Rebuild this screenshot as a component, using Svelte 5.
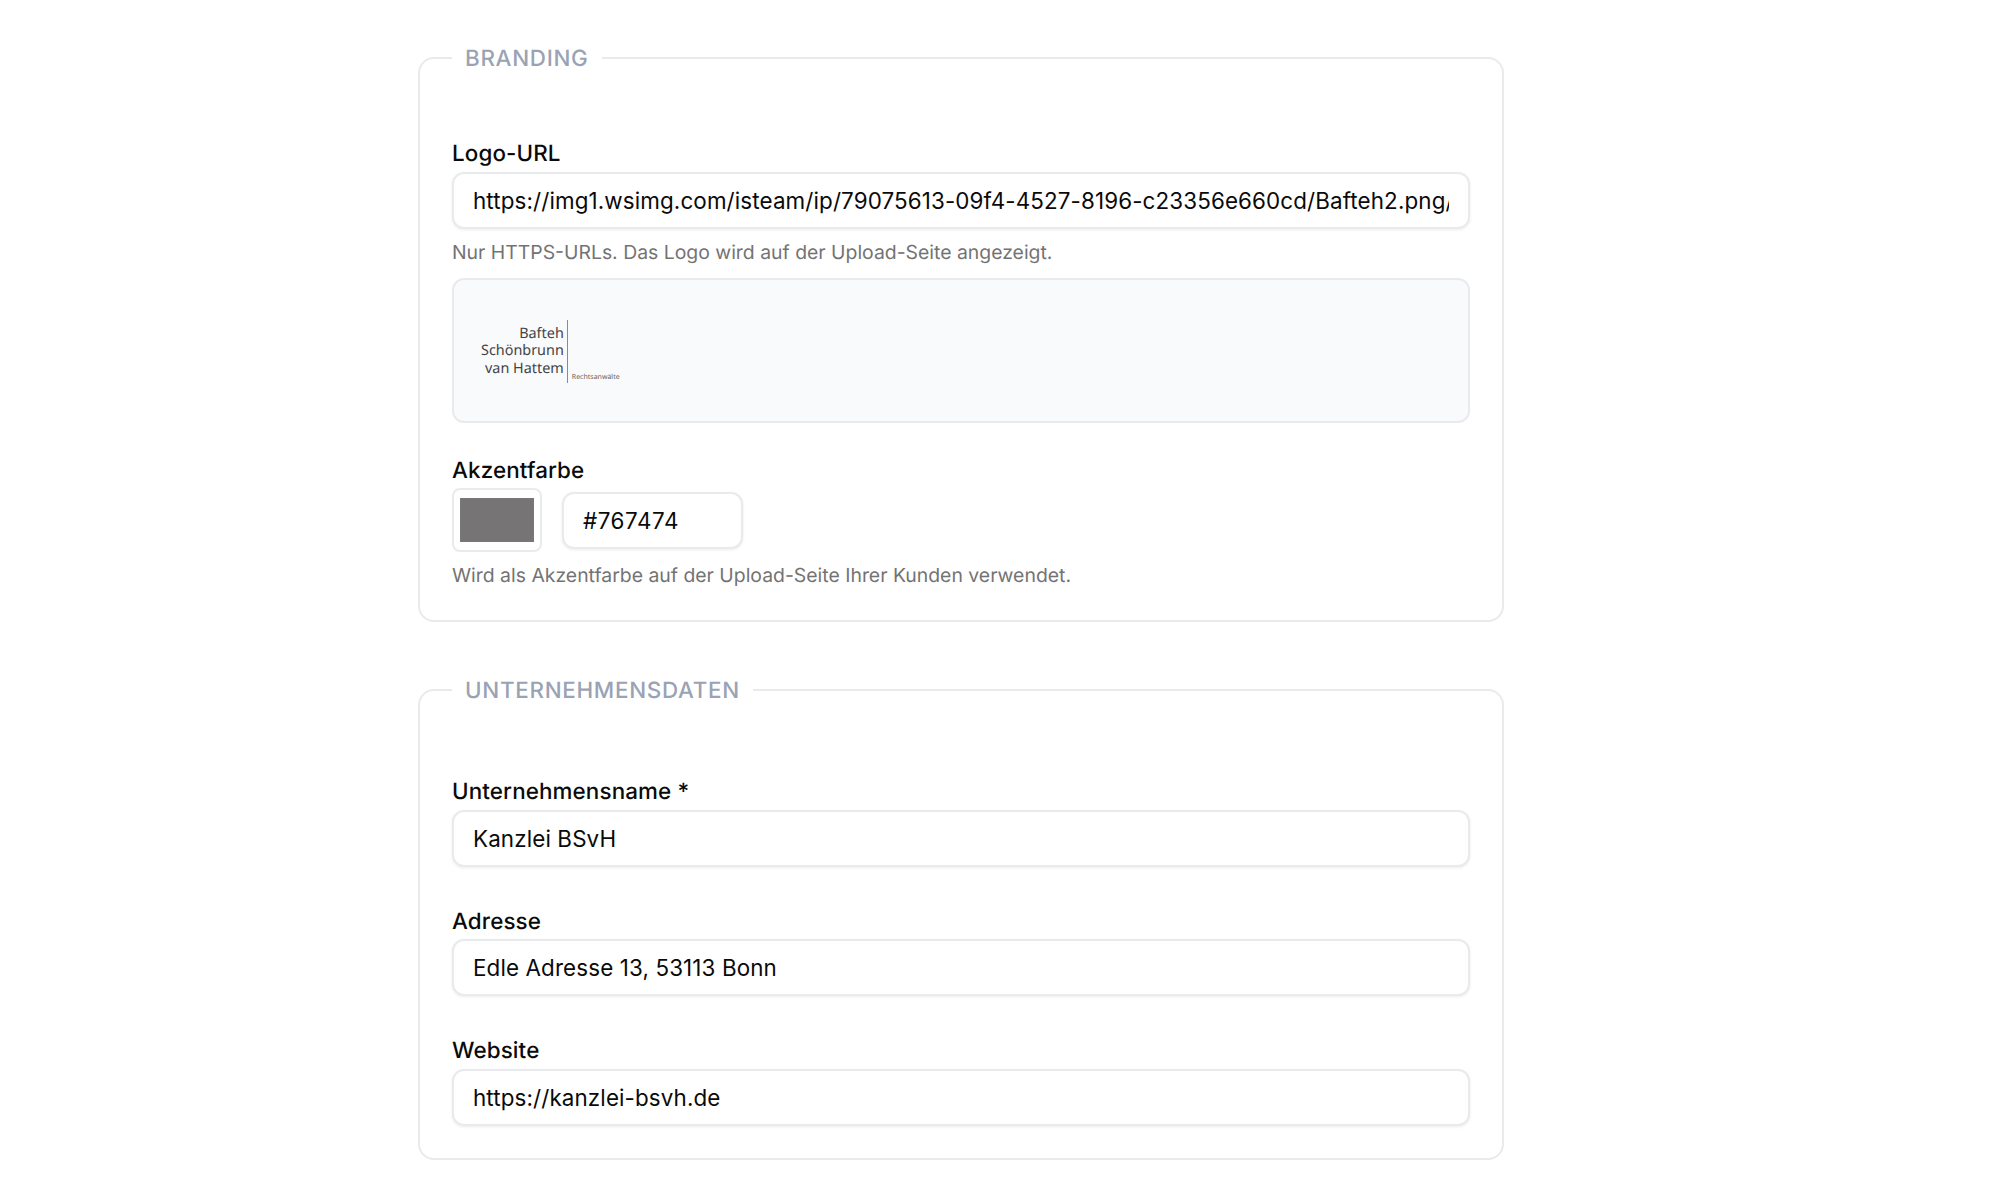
<script>
    let logoUrl = "https://img1.wsimg.com/isteam/ip/79075613-09f4-4527-8196-c23356e660cd/Bafteh2.png/:/rs=w:400,cg:true,m";
    let accent = "#767474";
    let firma = "Kanzlei BSvH";
    let adresse = "Edle Adresse 13, 53113 Bonn";
    let website = "https://kanzlei-bsvh.de";
</script>

<div class="page">
    <fieldset class="section branding">
        <legend>BRANDING</legend>

        <div class="group">
            <label for="logo">Logo-URL</label>
            <input id="logo" type="text" bind:value={logoUrl} />
            <p class="help">Nur HTTPS-URLs. Das Logo wird auf der Upload-Seite angezeigt.</p>
            <div class="preview">
                <div class="logo">
                    <div class="logo-name">
                        <span>Bafteh</span>
                        <span>Schönbrunn</span>
                        <span>van Hattem</span>
                    </div>
                    <div class="logo-sub">Rechtsanwälte</div>
                </div>
            </div>
        </div>

        <div class="group accent">
            <label for="akzent">Akzentfarbe</label>
            <div class="color-row">
                <input id="akzent" class="swatch" type="color" bind:value={accent} />
                <input class="hex" type="text" bind:value={accent} />
            </div>
            <p class="help">Wird als Akzentfarbe auf der Upload-Seite Ihrer Kunden verwendet.</p>
        </div>
    </fieldset>

    <fieldset class="section company">
        <legend>UNTERNEHMENSDATEN</legend>

        <div class="group">
            <label for="firma">Unternehmensname *</label>
            <input id="firma" type="text" bind:value={firma} />
        </div>
        <div class="group">
            <label for="adresse">Adresse</label>
            <input id="adresse" type="text" bind:value={adresse} />
        </div>
        <div class="group">
            <label for="website">Website</label>
            <input id="website" type="text" bind:value={website} />
        </div>
    </fieldset>
</div>

<style>
    :global(body) {
        margin: 0;
        background: #fff;
    }
    .page {
        width: 1086px;
        margin-left: 418px;
        padding-top: 42px;
        font-family: Inter, "Liberation Sans", sans-serif;
        color: #0a0a0a;
        text-rendering: geometricPrecision;
    }
    .section {
        margin: 0 0 52px;
        padding: 64px 32px 31px;
        border: 2px solid #e9eaee;
        border-radius: 16px;
        min-width: 0;
    }
    .section.company {
        padding-top: 70px;
        padding-bottom: 32px;
    }
    legend {
        margin-left: 0;
        padding: 2px 13px 0;
        font-size: 22.4px;
        line-height: 30px;
        font-weight: 500;
        letter-spacing: 0.7px;
        color: #9aa3b4;
    }
    .group {
        display: flex;
        flex-direction: column;
        margin-top: 39px;
    }
    .group:first-of-type {
        margin-top: 0;
    }
    .group.accent {
        margin-top: 32px;
    }
    label {
        font-size: 22.4px;
        line-height: 32px;
        font-weight: 500;
        letter-spacing: 0.12px;
        margin-bottom: 1.5px;
    }
    input[type="text"] {
        box-sizing: border-box;
        width: 100%;
        height: 57px;
        padding: 0 19px;
        border: 2px solid #e9eaee;
        border-radius: 12px;
        background: #fff;
        box-shadow: 0 1px 3px rgba(0, 0, 0, 0.08);
        font: inherit;
        font-size: 22.4px;
        letter-spacing: 0.12px;
        color: #0a0a0a;
        outline: none;
    }
    .help {
        margin: 9px 0 0;
        font-size: 19.4px;
        line-height: 28px;
        color: #737373;
    }
    .preview {
        box-sizing: border-box;
        height: 145px;
        margin-top: 12px;
        padding: 40px 27px 38px;
        border: 2px solid #e9eaee;
        border-radius: 12px;
        background: #f9fafb;
    }
    .logo {
        display: flex;
        align-items: flex-end;
        font-family: "Noto Sans", sans-serif;
        color: #444;
    }
    .logo-name {
        display: flex;
        flex-direction: column;
        align-items: flex-end;
        justify-content: center;
        height: 63px;
        padding-right: 3px;
        border-right: 1px solid #8b8b8b;
        font-size: 14.4px;
        line-height: 17.5px;
    }
    .logo-sub {
        padding-left: 4px;
        font-size: 7px;
        line-height: 10px;
        color: #666;
    }
    .color-row {
        display: flex;
        align-items: center;
        gap: 20px;
    }
    .swatch {
        box-sizing: border-box;
        width: 90px;
        height: 64px;
        padding: 4px;
        border: 2px solid #e9eaee;
        border-radius: 8px;
        background: #fff;
    }
    input.hex {
        width: 181px;
        letter-spacing: 0.55px;
    }
</style>
